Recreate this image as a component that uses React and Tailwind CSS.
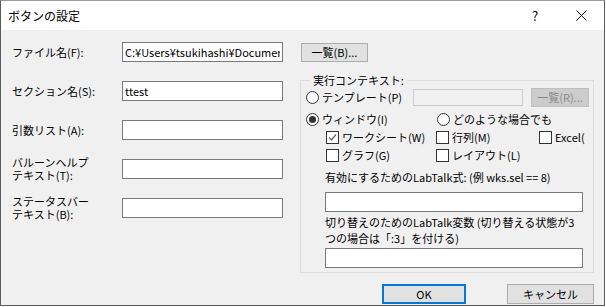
import React from 'react';

const font = "font-['Noto_Sans_CJK_JP','Liberation_Sans',sans-serif]";

const Radio = ({ checked }) => (
  <span className="w-[13px] h-[13px] rounded-full border border-[#333333] bg-white flex items-center justify-center shrink-0">
    {checked && <span className="w-[7px] h-[7px] rounded-full bg-[#333333]" />}
  </span>
);

const Check = ({ checked }) => (
  <span className="w-[13px] h-[13px] border border-[#333333] bg-white flex items-center justify-center shrink-0">
    {checked && (
      <svg width="11" height="11" viewBox="0 0 11 11">
        <path d="M2 5.5 L4.5 8 L9 2.5" fill="none" stroke="#666666" strokeWidth="1.2" />
      </svg>
    )}
  </span>
);

const Field = ({ value = '', w = 'w-[161px]' }) => (
  <input
    readOnly
    value={value}
    className={`${w} h-[20px] border border-[#7a7a7a] bg-white px-[2px] text-[11px] text-black outline-none overflow-hidden`}
  />
);

const rows = [
  { label: ['ファイル名(F):'], value: 'C:¥Users¥tsukihashi¥Documents¥OriginLab' },
  { label: ['セクション名(S):'], value: 'ttest' },
  { label: ['引数リスト(A):'], value: '' },
  { label: ['バルーンヘルプ', 'テキスト(T):'], value: '' },
  { label: ['ステータスバー', 'テキスト(B):'], value: '' },
];

export default function App() {
  return (
    <div className={`${font} w-[605px] h-[306px] border border-[#5a5a5a] border-t-[#9a9a9a] bg-[#f0f0f0] flex flex-col text-[11px] text-black`}>
      {/* タイトルバー */}
      <div className="h-[29px] bg-white flex items-center shrink-0">
        <span className="pl-[7px] text-[12px]">ボタンの設定</span>
        <span className="ml-auto w-[46px] text-center text-[13px]">?</span>
        <span className="w-[46px] flex justify-center">
          <svg width="11" height="11" viewBox="0 0 11 11">
            <path d="M0.5 0.5 L10.5 10.5 M10.5 0.5 L0.5 10.5" stroke="#111111" strokeWidth="1" />
          </svg>
        </span>
      </div>

      <div className="flex-1 flex flex-col pt-[12px] pl-[11px] pr-[10px]">
        <div className="flex">
          {/* 左側 */}
          <div className="flex flex-col gap-[19px]">
            {rows.map((r, i) => (
              <div key={i} className="flex items-center h-[20px]">
                <div className="w-[110px] leading-[13px] whitespace-nowrap">
                  {r.label.map((l) => (
                    <div key={l}>{l}</div>
                  ))}
                </div>
                <Field value={r.value} />
              </div>
            ))}
          </div>

          {/* 右側 */}
          <div className="ml-[18px] w-[293px] pt-[1px] flex flex-col">
            <button className="w-[67px] h-[19px] bg-[#e1e1e1] border border-[#adadad] text-[11px] leading-none flex items-center justify-center">
              一覧(B)...
            </button>

            <fieldset className="mt-[12px] -ml-px border border-[#dcdcdc] pl-[5px] pb-[4px]">
              <legend className="ml-[4px] px-[3px] leading-[13px]">実行コンテキスト:</legend>

              <div className="flex items-center h-[20px]">
                <div className="w-[107px] flex items-center gap-[3px]">
                  <Radio />
                  <span>テンプレート(P)</span>
                </div>
                <div className="w-[110px] h-[17px] border border-[#cccccc] bg-[#f0f0f0]" />
                <button className="ml-[8px] w-[58px] h-[19px] bg-[#cccccc] border border-[#bfbfbf] text-[#8a8a8a] text-[11px] leading-none flex items-center justify-center">
                  一覧(R)...
                </button>
              </div>

              <div className="flex items-center h-[18px] mt-[3px]">
                <div className="w-[131px] flex items-center gap-[3px]">
                  <Radio checked />
                  <span>ウィンドウ(I)</span>
                </div>
                <div className="flex items-center gap-[3px]">
                  <Radio />
                  <span>どのような場合でも</span>
                </div>
              </div>

              <div className="flex items-center h-[18px] pl-[20px]">
                <div className="w-[110px] flex items-center gap-[3px]">
                  <Check checked />
                  <span>ワークシート(W)</span>
                </div>
                <div className="w-[103px] flex items-center gap-[3px]">
                  <Check />
                  <span>行列(M)</span>
                </div>
                <div className="w-[49px] overflow-hidden flex items-center gap-[3px] whitespace-nowrap">
                  <Check />
                  <span>Excel(</span>
                </div>
              </div>

              <div className="flex items-center h-[18px] pl-[20px]">
                <div className="w-[110px] flex items-center gap-[3px]">
                  <Check />
                  <span>グラフ(G)</span>
                </div>
                <div className="flex items-center gap-[3px]">
                  <Check />
                  <span>レイアウト(L)</span>
                </div>
              </div>

              <div className="pl-[19px]">
                <div className="mt-[6px] leading-[14px] whitespace-nowrap">
                  有効にするためのLabTalk式: (例 wks.sel == 8)
                </div>
                <div className="mt-[8px]">
                  <Field w="w-[258px]" />
                </div>
                <div className="mt-[2px] leading-[16px] whitespace-nowrap">
                  <div>切り替えのためのLabTalk変数 (切り替える状態が3</div>
                  <div>つの場合は「:3」を付ける)</div>
                </div>
                <div className="mt-[2px]">
                  <Field w="w-[258px]" />
                </div>
              </div>
            </fieldset>
          </div>
        </div>

        <div className="flex justify-end mt-[11px]">
          <button className="w-[84px] h-[20px] bg-[#e1e1e1] border-2 border-[#0078d7] text-[11px] leading-none flex items-center justify-center">
            OK
          </button>
          <button className="ml-[41px] w-[87px] h-[20px] bg-[#e1e1e1] border border-[#adadad] text-[11px] leading-none flex items-center justify-center">
            キャンセル
          </button>
        </div>
      </div>
    </div>
  );
}
